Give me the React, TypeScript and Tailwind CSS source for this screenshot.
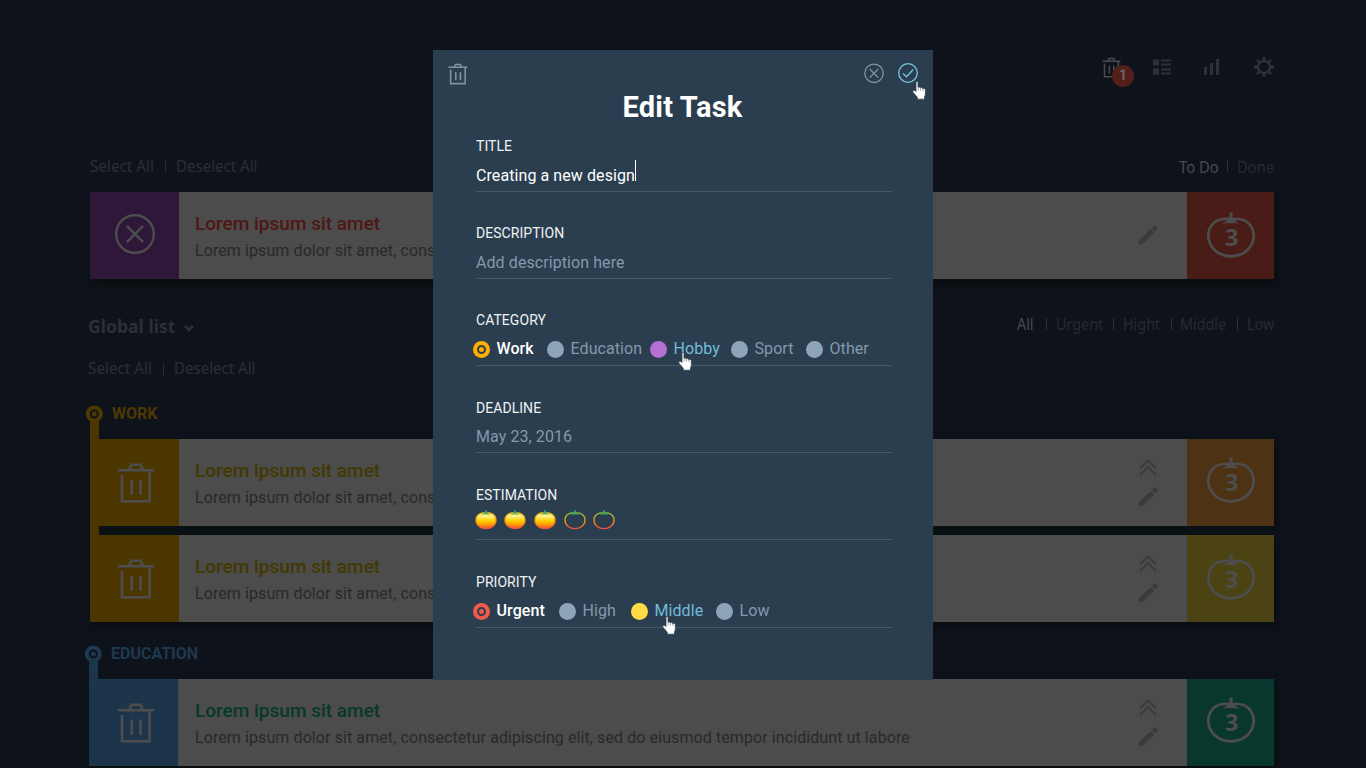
import type { ReactNode } from 'react';

const pt = "font-['Noto_Sans','Open_Sans',sans-serif]";

function Trash({ className, sw = 2.6 }: { className: string; sw?: number }) {
  return (
    <svg viewBox="0 0 38 40" className={className} fill="none" stroke="currentColor" strokeWidth={sw}>
      <path d="M1 7.3H37M12 7.3L14.5 1.8H23.5L26 7.3M5 12V38.3H32.6V8M14.8 16.5V32M23.6 16.5V32" />
    </svg>
  );
}

function Pencil() {
  return (
    <svg viewBox="0 0 20 20" className="h-5 w-5 text-[#3a3a3a]" fill="currentColor">
      <path d="M0.3 19.8L1.5 14.8L12.6 4L16.2 7.6L5.2 18.5Z" />
      <path d="M13.8 2.8L15.8 0.9Q17 0.1 18.3 1.3T19 4.2L17.3 6.4Z" />
    </svg>
  );
}

function Chevrons() {
  return (
    <svg viewBox="0 0 18 17" className="h-[17px] w-[18px] text-[#3c3c3c]" fill="none" stroke="currentColor" strokeWidth="2.3">
      <path d="M1 9.3L9 1.5L17 9.3M1 16L9 8.2L17 16" />
    </svg>
  );
}

function Tomato() {
  return (
    <div className="relative h-[46px] w-12 text-[#4d4d4d]">
      <svg viewBox="0 0 48 46" className="h-[46px] w-12">
        <path d="M24 7.8C20 6.3 12 6.2 7.2 10.5C2.5 14.7 1.3 19 1.3 23.5C1.3 35 11 44.3 24 44.3S46.7 35 46.7 23.5C46.7 19 45.5 14.7 40.8 10.5C36 6.2 28 6.3 24 7.8Z" fill="none" stroke="currentColor" strokeWidth="2.7" />
        <path d="M22.6 0.8L25.5 0L25.6 6.6L32.5 12.3Q28.5 10.4 24 11.2Q19.5 10.4 15.5 12.3L22.3 6.6Z" fill="currentColor" />
      </svg>
      <span className={`absolute left-[18px] top-[11px] text-[23.5px] font-bold leading-[28px] ${pt}`}>3</span>
    </div>
  );
}

type CardProps = { left: string; right: string; title: string; icon: ReactNode; tomato: string; chevrons?: boolean; wide?: boolean };

function Card({ left, right, title, icon, tomato, chevrons = true, wide = false }: CardProps) {
  return (
    <div className={`flex h-[87px] shrink-0 bg-[#4c4c4c] shadow-[3px_6px_9px_#090e10] ${wide ? '-ml-px w-[1185px]' : 'w-[1184px]'}`}>
      <div className={`w-[89px] shrink-0 text-[#4d4d4d] ${left}`}>{icon}</div>
      <div className={`flex-1 pt-[20px] ${wide ? 'pl-[17px]' : 'pl-4'}`}>
        <p className={`h-6 whitespace-nowrap text-[19px] font-medium leading-6 ${title}`}>Lorem ipsum sit amet</p>
        <p className="mt-[3px] h-6 whitespace-nowrap text-[16px] leading-6 tracking-[0.09px] text-[#292929]">
          Lorem ipsum dolor sit amet, consectetur adipiscing elit, sed do eiusmod tempor incididunt ut labore
        </p>
      </div>
      <div className="flex w-[49px] flex-col">
        {chevrons ? (
          <div className="flex flex-col pt-[19.5px]">
            <div className="h-[28.5px] pl-[1px]"><Chevrons /></div>
            <Pencil />
          </div>
        ) : (
          <div className="pt-[33px]"><Pencil /></div>
        )}
      </div>
      <div className={`w-[87px] shrink-0 pl-5 ${right} ${tomato}`}><Tomato /></div>
    </div>
  );
}

function Pin({ className, label }: { className: string; label: string }) {
  return (
    <div className={`mt-[19px] flex h-[25px] items-center ${className}`}>
      <svg viewBox="0 0 18 18" className="h-[18px] w-[18px]">
        <circle cx="9.3" cy="9" r="6.5" fill="none" stroke="currentColor" strokeWidth="4" />
        <circle cx="9.3" cy="9" r="2.5" fill="currentColor" />
      </svg>
      <span className="ml-[9px] pt-px text-[16px] font-bold">{label}</span>
    </div>
  );
}

function SelectRow({ className }: { className: string }) {
  return (
    <div className={`flex h-7 items-center whitespace-nowrap pt-0.5 text-[15.5px] text-[#2a2e38] ${pt} ${className}`}>
      <span className="w-[75px]"><span className="inline-block origin-left scale-x-[.985]">Select All</span></span>
      <span className="h-3 w-px bg-[#2a2e38]" />
      <span className="ml-[10px]"><span className="inline-block origin-left scale-x-[.97]">Deselect All</span></span>
    </div>
  );
}

function Filter({ w, children, active = false, sep = true }: { w: string; children: string; active?: boolean; sep?: boolean }) {
  return (
    <span className={`flex shrink-0 items-center ${w} ${active ? 'text-[#4a4a4a]' : 'text-[#252a34]'}`}>
      <span className="w-0 flex-1"><span className="inline-block origin-left scale-x-[.925]">{children}</span></span>
      {sep && <span className="mb-[2px] h-3 w-px bg-[#2d3139]" />}
    </span>
  );
}

function Hand({ className }: { className: string }) {
  return (
    <svg viewBox="0 0 15 19" className={`absolute h-[19px] w-[15px] ${className}`}>
      <path d="M4 1.2C4 .3 6 .3 6 1.2V6.4C6.3 5.6 8.2 5.8 8.3 7C8.8 6.2 10.7 6.5 10.8 7.7C11.5 7.2 13.4 7.4 13.4 9V13C13.4 14.3 12.7 15 12.5 16V18.2H5.3V16.3L1.2 11.4C.1 9.8 1.5 8.4 3 9.6L4 10.6Z" fill="#fff" stroke="#34434d" strokeWidth=".8" />
      <path d="M6.2 6.5V9.6M8.5 7.2V9.8M10.9 8V10.2" stroke="#6d7880" strokeWidth=".6" />
    </svg>
  );
}

function Field({ label, children, last = false, low = false }: { label: string; children: ReactNode; last?: boolean; low?: boolean }) {
  return (
    <div className={`h-14 w-[416px] shrink-0 border-b border-[#435a6c] ${last ? 'mt-8' : 'mt-[31px]'}`}>
      <div className={`flex h-5 items-center text-[14px] tracking-[0.05px] text-[#f0f2f4] ${low ? 'pt-[2px]' : ''}`}>{label}</div>
      <div className="flex h-[35px] items-center pt-[4px] text-[16px] tracking-[0.08px] text-[#8499ab]">{children}</div>
    </div>
  );
}

function Option({ dot, w, text, target = false, children }: { dot: string; w: string; text: string; target?: boolean; children: string }) {
  return (
    <span className={`flex shrink-0 items-center ${w}`}>
      <svg viewBox="0 0 17 17" className={`h-[17px] w-[17px] ${dot}`}>
        <circle cx="8.5" cy="8.5" r="8.5" fill="currentColor" />
        {target && <circle cx="8.5" cy="8.5" r="3.5" fill="currentColor" stroke="#2b3e4f" strokeWidth="2" />}
      </svg>
      <span className={`ml-[6.5px] ${text}`}>{children}</span>
    </span>
  );
}

function Rating({ full = false }: { full?: boolean }) {
  const id = full ? 'ripe' : 'empty';
  return (
    <svg viewBox="0 0 22 20" className="h-5 w-[22px]">
      <defs>
        <linearGradient id={id} x1="0" y1="0" x2="0" y2="1">
          <stop offset="0" stopColor={full ? '#ffc400' : '#8ac43f'} />
          <stop offset=".15" stopColor={full ? '#fff3a0' : '#c9c02c'} />
          <stop offset=".5" stopColor={full ? '#ffd000' : '#f0a000'} />
          <stop offset=".72" stopColor={full ? '#ffa000' : '#f57a20'} />
          <stop offset="1" stopColor="#f0503c" />
        </linearGradient>
        <linearGradient id="rim" x1="0" y1="0" x2="0" y2="1">
          <stop offset="0" stopColor="#e0c020" />
          <stop offset=".5" stopColor="#ff9a00" />
          <stop offset="1" stopColor="#f0503c" />
        </linearGradient>
      </defs>
      <path d="M11 3.3C7 2.1 1 4.2 1 10C1 15.2 5.5 18.6 11 18.6S21 15.2 21 10C21 4.2 15 2.1 11 3.3Z" fill={full ? `url(#${id})` : 'none'} stroke={full ? 'url(#rim)' : `url(#${id})`} strokeWidth="1.3" />
      <path d="M10.5 .2H11.6L11.7 3L14.5 4.7L11 4.1L7.5 4.7L10.4 3Z" fill="#35b777" stroke="#35b777" strokeWidth=".3" />
    </svg>
  );
}

const grey = 'text-[#8ea4b8]';

export default function App() {
  return (
    <div className="relative h-[768px] w-[1366px] overflow-hidden bg-[#0e131b] font-['Roboto',sans-serif]">
      <div className="flex flex-col pl-[90px]">
        <header className="flex h-[134px] w-[1184px] items-center justify-end text-[#2b303a]">
          <div className="relative mr-8 h-[21px] w-[19px] text-[#4b4b4b]">
            <Trash className="h-[21px] w-[19px]" sw={3} />
            <span className="absolute left-[10px] top-[8px] flex h-[22px] w-[22px] items-center justify-center rounded-full bg-[#541e1b] text-[14px] font-bold text-[#686868]">1</span>
          </div>
          <svg viewBox="0 0 18 16" className="mr-[33px] h-4 w-[18px]" fill="currentColor">
            <path d="M0 .5h6v6H0zM0 9.5h6v6H0zM8 .5h10v2H8zM8 4.5h10v2H8zM8 9.5h10v2H8zM8 13.5h10v2H8z" />
          </svg>
          <svg viewBox="0 0 16 16" className="mr-[34px] h-4 w-4" fill="currentColor">
            <path d="M0 8h3v8H0zM6 4h3v12H6zM12 0h3v16h-3z" />
          </svg>
          <svg viewBox="0 0 20 20" className="h-5 w-5" fill="none" stroke="currentColor">
            <circle cx="10" cy="10" r="6" strokeWidth="2.4" />
            <path d="M10 0V4M10 16V20M0 10H4M16 10H20M3 3L5.7 5.7M14.3 14.3L17 17M3 17L5.7 14.3M14.3 5.7L17 3" strokeWidth="3" />
          </svg>
        </header>

        <div className="mt-[18px] flex h-7 w-[1184px] justify-between">
          <SelectRow className="" />
          <div className={`flex items-center whitespace-nowrap pt-0.5 text-[16px] ${pt}`}>
            <Filter w="w-[49px]" active>To Do</Filter>
            <Filter w="ml-[9px] w-[37px]" sep={false}>Done</Filter>
          </div>
        </div>

        <div className="mt-3">
          <Card
            left="bg-[#2f1739]" right="bg-[#4a1c18]" title="text-[#4f1713]" tomato="pt-5" chevrons={false}
            icon={
              <svg viewBox="0 0 40 40" className="ml-[25px] mt-[22px] h-10 w-10" fill="none" stroke="currentColor" strokeWidth="2.4">
                <circle cx="20" cy="20" r="18.8" />
                <path d="M11.8 11.8L28.2 28.2M28.2 11.8L11.8 28.2" />
              </svg>
            }
          />
        </div>

        <div className={`mt-[33px] flex h-7 w-[1185px] items-center justify-between whitespace-nowrap ${pt}`}>
          <div className="-ml-0.5 flex items-center text-[#2a2f39]">
            <span className="w-[96px]"><span className="inline-block origin-left scale-x-[.95] text-[18.5px] font-bold">Global list</span></span>
            <svg viewBox="0 0 10 7" className="mt-1 h-[7px] w-[10px]" fill="none" stroke="currentColor" strokeWidth="2.8"><path d="M1 1L5 5L9 1" /></svg>
          </div>
          <div className="flex items-center pb-[2px] text-[15.5px]">
            <Filter w="w-[30px]" active>All</Filter>
            <Filter w="ml-[9px] w-[58px]">Urgent</Filter>
            <Filter w="ml-[9px] w-[49px]">Hight</Filter>
            <Filter w="ml-[8px] w-[58px]">Middle</Filter>
            <Filter w="ml-[9px] w-[28px]" sep={false}>Low</Filter>
          </div>
        </div>
        <SelectRow className="-ml-0.5 mt-[14px]" />

        <Pin className="-ml-[5px] text-[#4f3800]" label="WORK" />
        <div className="h-[13px] w-[9px] bg-[#4c3600] shadow-[0_-6px_0_#4c3600]" />
        <Card left="bg-[#4c3600]" right="bg-[#4e3214]" title="text-[#423800]" tomato="pt-[18px]" icon={<Trash className="ml-[27px] mt-[23.5px] h-10 w-[38px]" />} />
        <div className="relative h-[9px] w-[1184px] bg-[#0a1115]"><div className="h-full w-[9px] bg-[#4c3600]" /></div>
        <Card left="bg-[#4c3600]" right="bg-[#4b4313]" title="text-[#423800]" tomato="pt-[19px]" icon={<Trash className="ml-[27px] mt-[23.5px] h-10 w-[38px]" />} />

        <Pin className="-ml-[6px] text-[#1e3850]" label="EDUCATION" />
        <div className="-ml-px h-[13px] w-[9px] bg-[#1d354a] shadow-[0_-6px_0_#1d354a]" />
        <Card wide left="bg-[#1d354a]" right="bg-[#0a372d]" title="text-[#07382b]" tomato="pt-[18px]" icon={<Trash className="ml-[28px] mt-[23.5px] h-10 w-[38px]" />} />
      </div>

      <section className="absolute left-[433px] top-[50px] z-20 flex h-[630px] w-[500px] flex-col bg-[#2b3e4f] pl-[43px]">
        <div className="-ml-7 flex h-[43px] w-[470px] items-start pt-[13px] text-[#8093a4]">
          <Trash className="h-[22px] w-5" sw={3} />
          <svg viewBox="0 0 20 20" className="ml-auto h-5 w-5" fill="none" stroke="currentColor" strokeWidth="1.3">
            <circle cx="10" cy="10.3" r="9.2" /><path d="M5.7 6L14.3 14.6M14.3 6L5.7 14.6" />
          </svg>
          <svg viewBox="0 0 20 20" className="ml-[14.5px] h-5 w-5 text-[#75c4de]" fill="none" stroke="currentColor" strokeWidth="1.3">
            <circle cx="10" cy="10" r="9.3" /><path d="M5 10.5L8.5 13.8L15.2 6.5" />
          </svg>
        </div>
        <h1 className="-mb-[31px] h-[43px] w-[413px] text-center text-[29px] font-bold leading-7 tracking-[0.2px] text-white">Edit Task</h1>
        <Field label="TITLE">
          <span className="text-white">Creating a new design</span>
          <span className="mb-[10px] h-[21px] w-px bg-white" />
        </Field>
        <Field label="DESCRIPTION">Add description here</Field>
        <Field label="CATEGORY">
          <div className="-ml-[3px] -mt-px flex">
            <Option w="w-[74px]" dot="text-[#ffae00]" text="font-medium text-white" target>Work</Option>
            <Option w="w-[103px]" dot={grey} text="">Education</Option>
            <Option w="w-[81px]" dot="text-[#b470d2]" text="text-[#71bcd8]">Hobby</Option>
            <Option w="w-[75px]" dot={grey} text="">Sport</Option>
            <Option w="w-[70px]" dot={grey} text="">Other</Option>
          </div>
        </Field>
        <Field label="DEADLINE" low>May 23, 2016</Field>
        <Field label="ESTIMATION" low>
          <div className="-ml-[1.5px] flex gap-[7.7px] pb-[7px]">
            <Rating full /><Rating full /><Rating full /><Rating /><Rating />
          </div>
        </Field>
        <Field label="PRIORITY" last>
          <div className="-ml-[3px] -mt-px flex">
            <Option w="w-[86px]" dot="text-[#f2594b]" text="font-medium text-white" target>Urgent</Option>
            <Option w="w-[72px]" dot={grey} text="">High</Option>
            <Option w="w-[85px]" dot="text-[#ffdc45]" text="text-[#71bcd8]">Middle</Option>
            <Option w="w-[70px]" dot={grey} text="">Low</Option>
          </div>
        </Field>
        <Hand className="left-[479px] top-[31px]" />
        <Hand className="left-[245px] top-[302px]" />
        <Hand className="left-[229px] top-[566px]" />
      </section>
    </div>
  );
}
